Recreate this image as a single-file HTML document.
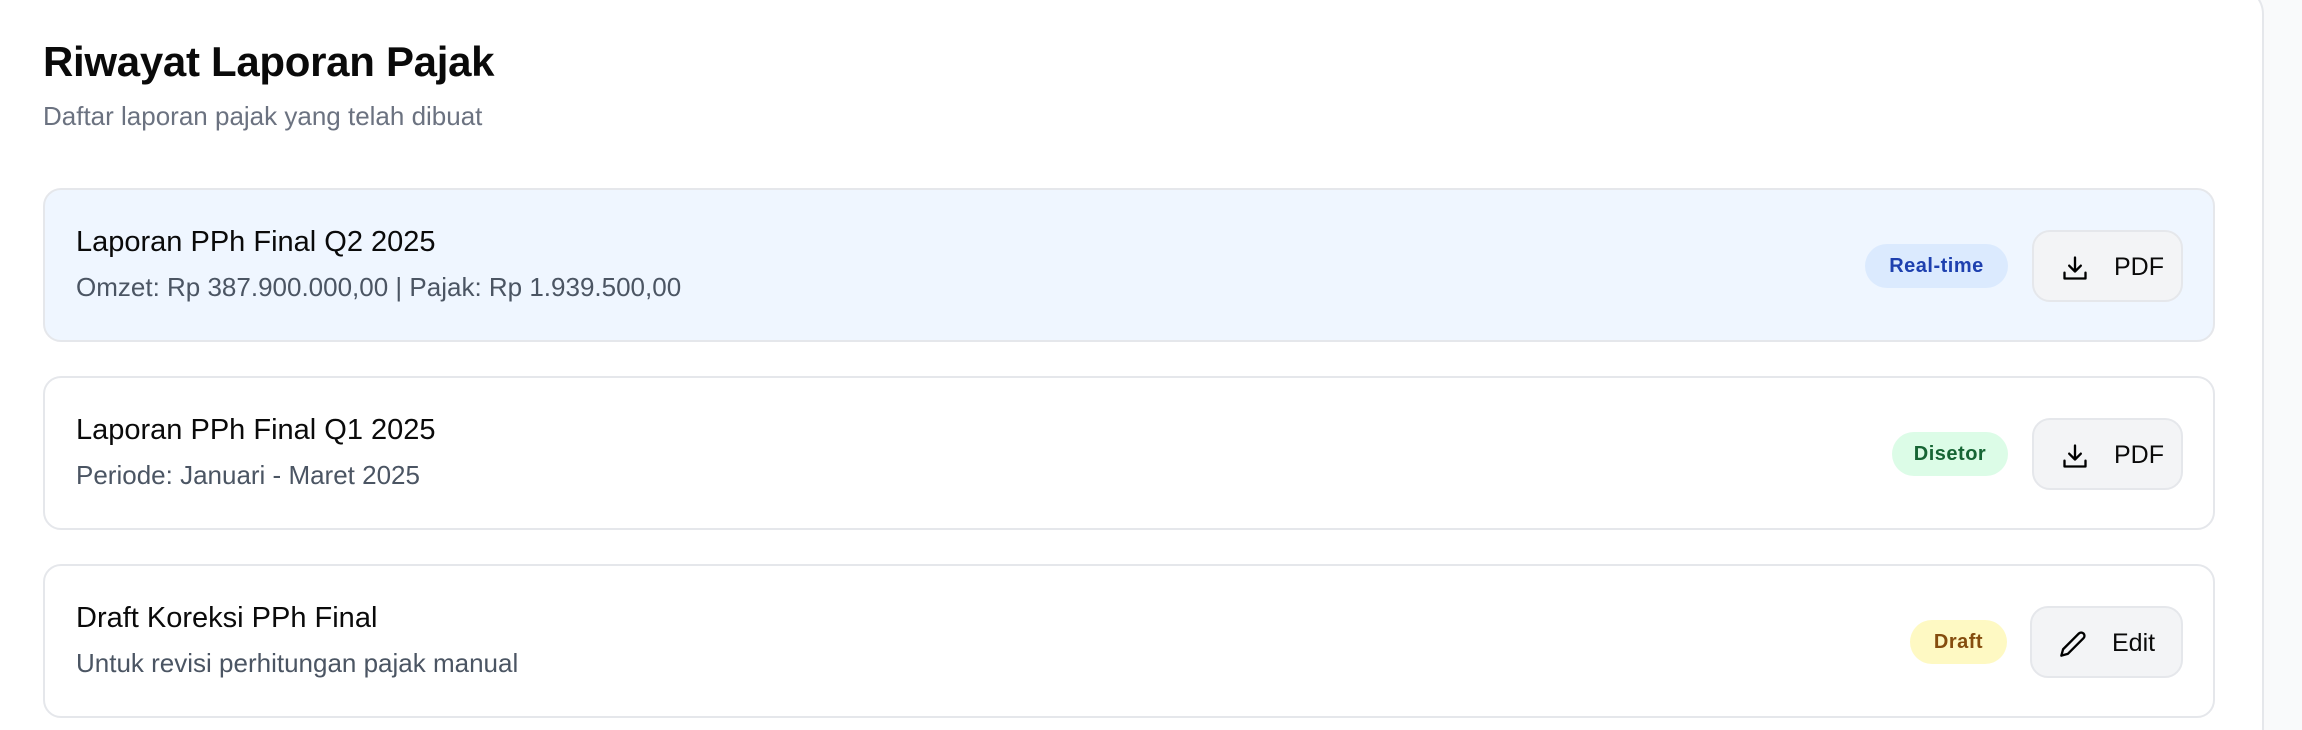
<!DOCTYPE html>
<html><head><meta charset="utf-8"><style>
*{box-sizing:border-box;margin:0;padding:0}
html,body{width:2302px;height:730px;overflow:hidden}
body{background:#f9fafb;font-family:"Liberation Sans",sans-serif;position:relative}
.panel{position:absolute;left:-20px;top:-14px;width:2284px;height:744px;background:#fff;border:2px solid #e5e7eb;border-bottom:none;border-radius:0 28px 0 0}
h1{position:absolute;left:43px;top:38px;font-size:42px;font-weight:700;color:#0a0a0a;letter-spacing:-0.3px}
.sub{position:absolute;left:43px;top:101px;font-size:26px;color:#6b7280}
.card{position:absolute;left:43px;width:2172px;height:154px;border:2px solid #e5e7eb;border-radius:18px;background:#fff}
.card.hl{background:#eff6ff}
.t{position:absolute;left:31px;top:36px;font-size:29px;color:#0a0a0a}
.d{position:absolute;left:31px;top:82px;font-size:26px;color:#4b5563}
.badge{position:absolute;top:54px;height:44px;border-radius:22px;font-size:20px;font-weight:700;display:flex;align-items:center;justify-content:center;letter-spacing:0.5px}
.btn{position:absolute;top:40px;left:1987px;width:151px;height:72px;background:#f3f4f6;border:2px solid #e5e7eb;border-radius:18px;font-size:25px;color:#0a0a0a}
.btn svg{position:absolute;left:27px;top:22px}
.btn span{position:absolute;left:80px;top:21px}
</style></head><body>
<div class="panel"></div>
<h1>Riwayat Laporan Pajak</h1>
<div class="sub">Daftar laporan pajak yang telah dibuat</div>

<div class="card hl" style="top:188px">
<div class="t">Laporan PPh Final Q2 2025</div>
<div class="d">Omzet: Rp 387.900.000,00 | Pajak: Rp 1.939.500,00</div>
<div class="badge" style="left:1820px;width:143px;background:#dbeafe;color:#1e40af">Real-time</div>
<div class="btn"><svg width="28" height="28" viewBox="0 0 24 24" fill="none" stroke="#000" stroke-width="2" stroke-linecap="round" stroke-linejoin="round"><path d="M12 3v12M7 10l5 5 5-5M3 16v5h18v-5"/></svg><span>PDF</span></div>
</div>

<div class="card" style="top:376px">
<div class="t">Laporan PPh Final Q1 2025</div>
<div class="d">Periode: Januari - Maret 2025</div>
<div class="badge" style="left:1847px;width:116px;background:#dcfce7;color:#166534">Disetor</div>
<div class="btn"><svg width="28" height="28" viewBox="0 0 24 24" fill="none" stroke="#000" stroke-width="2" stroke-linecap="round" stroke-linejoin="round"><path d="M12 3v12M7 10l5 5 5-5M3 16v5h18v-5"/></svg><span>PDF</span></div>
</div>

<div class="card" style="top:564px">
<div class="t">Draft Koreksi PPh Final</div>
<div class="d">Untuk revisi perhitungan pajak manual</div>
<div class="badge" style="left:1865px;width:97px;background:#fef9c3;color:#854d0e">Draft</div>
<div class="btn" style="left:1985px;width:153px"><svg width="28" height="28" viewBox="0 0 24 24" fill="none" stroke="#000" stroke-width="2" stroke-linecap="round" stroke-linejoin="round"><path d="M17 3a2.8 2.8 0 0 1 4 4L7.5 20.5 2 22l1.5-5.5Z"/></svg><span style="left:80px">Edit</span></div>
</div>
</body></html>
